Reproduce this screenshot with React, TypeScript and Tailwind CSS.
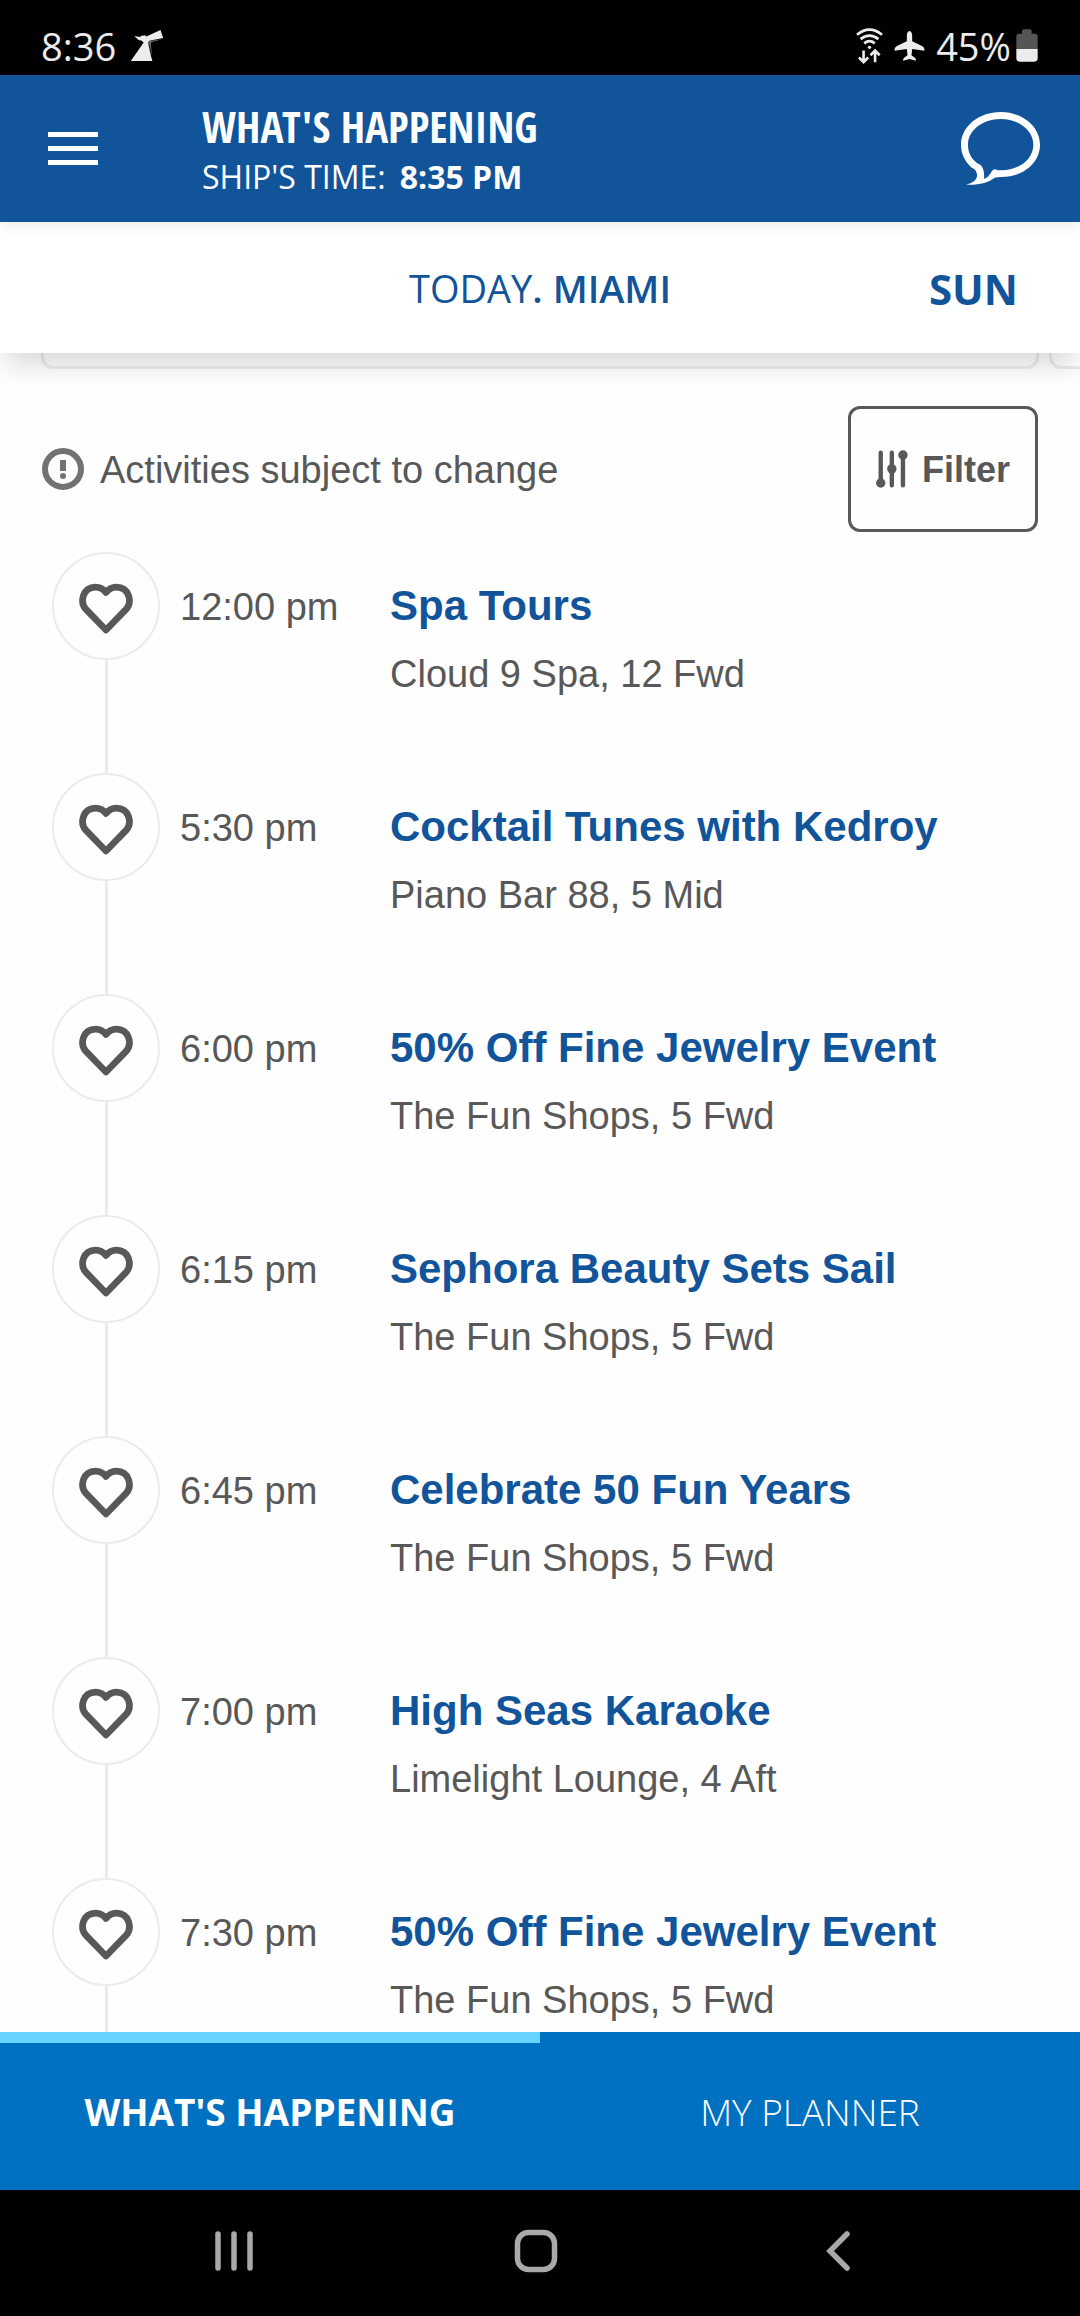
type Activity = {
  time: string;
  title: string;
  place: string;
};

const activities: Activity[] = [
  { time: "12:00 pm", title: "Spa Tours", place: "Cloud 9 Spa, 12 Fwd" },
  { time: "5:30 pm", title: "Cocktail Tunes with Kedroy", place: "Piano Bar 88, 5 Mid" },
  { time: "6:00 pm", title: "50% Off Fine Jewelry Event", place: "The Fun Shops, 5 Fwd" },
  { time: "6:15 pm", title: "Sephora Beauty Sets Sail", place: "The Fun Shops, 5 Fwd" },
  { time: "6:45 pm", title: "Celebrate 50 Fun Years", place: "The Fun Shops, 5 Fwd" },
  { time: "7:00 pm", title: "High Seas Karaoke", place: "Limelight Lounge, 4 Aft" },
  { time: "7:30 pm", title: "50% Off Fine Jewelry Event", place: "The Fun Shops, 5 Fwd" }
];

function StatusBar() {
  return (
    <div className="flex h-[75px] shrink-0 items-center justify-between bg-black pl-[41px] pr-[42px] pt-4 font-['Open_Sans',sans-serif] text-[38px] leading-[56px] text-[#ececec]">
      <div className="flex items-center gap-[14px]">
        <span>8:36</span>
        {/* cruise line funnel */}
        <svg viewBox="0 0 96 92" className="h-[31px] w-[34px]" fill="currentColor" aria-hidden="true">
          <path d="M10 18 L27 21 Q32 14 37 17 Q42 14 46 19 L88 0 L96 24 L55 32 Q51 34 52 41 L60 78 L64 92 H0 L38 37 L31 31 L23 30 Z" />
          <path d="M95 27 L60 36 L59 42 L64 80 L54 38 Q53 34 58 33 Z" fill="#777" />
        </svg>
      </div>
      <div className="flex items-center gap-[5px]">
        <svg viewBox="102 86 82 108" className="h-[36px] w-[27px]" fill="none" stroke="currentColor" aria-hidden="true">
          <path d="M105 106 Q143 75 181 106" strokeWidth="8" />
          <path d="M116 119 Q143 98 170 119" strokeWidth="8" />
          <path d="M127 132 Q143 119 159 132" strokeWidth="8" />
          <circle cx="143" cy="144" r="5" fill="currentColor" stroke="none" />
          <path d="M125 154 V188 M111 175 L125 189 L139 175" strokeWidth="8" />
          <path d="M160 189 V155 M146 168 L160 154 L174 168" strokeWidth="8" />
        </svg>
        <svg viewBox="217 95 92 90" className="ml-[6px] h-[30px] w-[31px]" fill="currentColor" aria-hidden="true">
          <path d="M263 95 Q271 97 271 110 V126 L302 141 Q309 145 308 154 L271 149 L269 168 L280 176 Q283 180 282 184 L263 179 L244 184 Q243 180 246 176 L257 168 L255 149 L218 154 Q217 145 224 141 L255 126 V110 Q255 97 263 95 Z" />
        </svg>
        <span className="ml-[6px]">45%</span>
        <svg viewBox="590 90 66 99" className="h-[33px] w-[22px]" aria-hidden="true">
          <path d="M591 150 V113 Q591 104 600 104 H608 V97 Q608 91 614 91 H631 Q637 91 637 97 V104 H645 Q655 104 655 113 V150 Z" fill="#555" />
          <path d="M591 150 H655 V178 Q655 188 645 188 H601 Q591 188 591 178 Z" fill="#ececec" />
        </svg>
      </div>
    </div>
  );
}

function Header() {
  return (
    <header className="relative z-20 flex h-[147px] shrink-0 items-center bg-[#11549a] pl-12 pr-10 font-['Open_Sans',sans-serif] text-white shadow-[0_2px_14px_rgba(0,0,0,0.1)]">
      <button type="button" aria-label="Menu" className="flex w-[50px] flex-col gap-[9px]">
        <span className="h-[5px] w-full bg-white" />
        <span className="h-[5px] w-full bg-white" />
        <span className="h-[5px] w-full bg-white" />
      </button>
      <div className="ml-[104px] flex-1 pt-[6px] leading-[50px]">
        <h1 className="font-['Open_Sans_Condensed','Open_Sans',sans-serif] text-[43px] font-extrabold">WHAT'S HAPPENING</h1>
        <p className="flex gap-[14px] text-[32px]">
          <span>SHIP'S TIME:</span>
          <span className="font-bold">8:35 PM</span>
        </p>
      </div>
      <button type="button" aria-label="Chat">
        <svg viewBox="423 336 237 219" className="h-[73px] w-[79px]" fill="currentColor" aria-hidden="true">
          <path
            fillRule="evenodd"
            d="M542 336 C608 336 660 380 660 434 C660 489 608 531 545 531 Q529 531 524 533 C505 548 475 556 438 554 C458 549 473 541 471 522 Q470 513 463 508 C437 491 423 463 423 434 C423 380 476 336 542 336 Z M542 357 C486 357 444 392 444 434 C444 462 458 482 478 493 C490 500 494 516 492 537 Q506 531 512 520 Q520 503 531 510 Q537 511 545 511 C598 510 640 477 640 434 C640 391 597 357 542 357 Z"
          />
        </svg>
      </button>
    </header>
  );
}

function DayBar() {
  return (
    <div className="relative z-10 grid h-[131px] shrink-0 grid-cols-[1fr_auto_1fr] items-center bg-white pt-[2px] font-['Open_Sans',sans-serif] text-[#11549a] shadow-[0_16px_28px_-6px_rgba(0,0,0,0.16)]">
      <span />
      <button type="button" className="text-[38px]">
        TODAY<span className="font-semibold">. MIAMI</span>
      </button>
      <button type="button" className="mr-[62px] justify-self-end text-[42px] font-bold">
        SUN
      </button>
    </div>
  );
}

function ActivityRow({ activity }: { activity: Activity }) {
  return (
    <li className="flex h-[221px] shrink-0 leading-[68px]">
      <div className="flex w-[108px] flex-col items-center">
        <button
          type="button"
          aria-label={`Add ${activity.title} to planner`}
          className="flex size-[108px] shrink-0 items-center justify-center rounded-full border-2 border-[#ebebeb] pt-1"
        >
          <svg viewBox="148 127 160 158" className="h-[53px] w-[54px]" aria-hidden="true">
            <path
              d="M228 270 L167 207 C150 187 158 142 197 142 Q216 142 228 158 Q240 142 259 142 C298 142 306 187 289 207 Z"
              fill="none"
              stroke="#585858"
              strokeWidth="20"
              strokeLinejoin="round"
            />
          </svg>
        </button>
        <span className="w-[3px] flex-1 bg-[#ebebeb]" />
      </div>
      <time className="ml-5 w-[210px] shrink-0 pt-[21px] text-[38px]">{activity.time}</time>
      <div className="pt-5">
        <h2 className="text-[42px] font-bold text-[#11549a]">{activity.title}</h2>
        <p className="text-[38px]">{activity.place}</p>
      </div>
    </li>
  );
}

function PlannerTabs() {
  return (
    <nav className="grid h-[158px] shrink-0 grid-cols-2 bg-[#0070c0] font-['Open_Sans',sans-serif] text-[37px] text-white">
      <a href="#happening" aria-current="page" className="flex items-center justify-center border-t-[11px] border-[#66d3ff] pb-[9px] font-bold">
        WHAT'S HAPPENING
      </a>
      <a href="#planner" className="flex items-center justify-center border-t-[11px] border-transparent pb-[9px] font-light">
        MY PLANNER
      </a>
    </nav>
  );
}

function SystemNav() {
  return (
    <div className="grid h-[126px] shrink-0 grid-cols-3 items-center justify-items-center bg-black pb-1 pl-[83px] pr-[91px] text-[#a9a9a9]">
      <button type="button" aria-label="Recent apps">
        <svg viewBox="0 0 38 42" className="h-[42px] w-[38px]" stroke="currentColor" strokeWidth="5.5" strokeLinecap="round" aria-hidden="true">
          <path d="M3 4 V38 M19 4 V38 M35 4 V38" />
        </svg>
      </button>
      <button type="button" aria-label="Home">
        <svg viewBox="0 0 44 44" className="size-[44px]" fill="none" stroke="currentColor" strokeWidth="5.5" aria-hidden="true">
          <rect x="3.5" y="3.5" width="37" height="37" rx="11" />
        </svg>
      </button>
      <button type="button" aria-label="Back">
        <svg viewBox="0 0 24 42" className="h-[42px] w-[24px]" fill="none" stroke="currentColor" strokeWidth="5.5" strokeLinecap="round" aria-hidden="true">
          <path d="M21 4 L4 21 L21 38" />
        </svg>
      </button>
    </div>
  );
}

export default function App() {
  return (
    <div className="flex h-screen flex-col overflow-hidden bg-white">
      <StatusBar />
      <Header />
      <DayBar />
      <main className="flex min-h-0 flex-1 flex-col overflow-hidden bg-[#fefefe] font-['Liberation_Sans',Arial,sans-serif] text-[#585858]">
        {/* bottom edge of the scrolled card carousel */}
        <div className="flex h-4 shrink-0 gap-[10px] overflow-hidden pl-[41px]">
          <div className="w-[calc(100%-41px)] shrink-0 rounded-b-xl border-x-3 border-b-3 border-[#ebebeb]" />
          <div className="w-full shrink-0 rounded-b-xl border-x-3 border-b-3 border-[#ebebeb]" />
        </div>
        <div className="mt-[37px] flex shrink-0 items-center justify-between px-[42px]">
          <p className="flex items-center gap-4 text-[38px]">
            <svg viewBox="0 0 42 42" className="size-[42px]" aria-hidden="true">
              <circle cx="21" cy="21" r="18" fill="none" stroke="#717274" strokeWidth="6" />
              <path d="M18 12 H24 V23 H18 Z" fill="#717274" />
              <circle cx="21" cy="28" r="3" fill="#717274" />
            </svg>
            <span className="pt-[2px]">Activities subject to change</span>
          </p>
          <button
            type="button"
            className="flex h-[126px] w-[190px] items-center justify-center gap-[14px] rounded-xl border-3 border-[#585858] text-[36px] font-bold"
          >
            <svg viewBox="170 332 95 113" className="h-[38px] w-[32px]" fill="#585858" stroke="#585858" strokeWidth="13" strokeLinecap="round" aria-hidden="true">
              <path d="M184 340 V430 M217 340 V437 M250 345 V437" />
              <g stroke="none">
                <circle cx="184" cy="430" r="14" />
                <circle cx="217" cy="388" r="14" />
                <circle cx="250" cy="347" r="14" />
              </g>
            </svg>
            <span className="pt-[2px]">Filter</span>
          </button>
        </div>
        <ul className="mt-5 pl-[52px]">
          {activities.map((activity) => (
            <ActivityRow key={activity.time} activity={activity} />
          ))}
        </ul>
      </main>
      <PlannerTabs />
      <SystemNav />
    </div>
  );
}
